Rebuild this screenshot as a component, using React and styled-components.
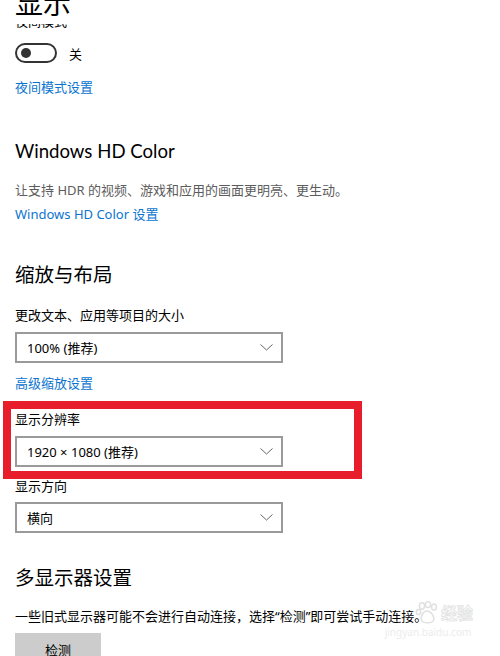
import React from "react";
import styled, { createGlobalStyle } from "styled-components";

const GlobalStyle = createGlobalStyle`
  html, body {
    margin: 0;
    padding: 0;
    background: #fff;
    overflow: hidden;
  }
  body {
    font-family: "Segoe UI", "Noto Sans", "Noto Sans CJK SC", sans-serif;
    color: #000;
  }
`;

const Page = styled.div`
  position: relative;
  width: 500px;
  height: 656px;
  padding-left: 15px;
  box-sizing: border-box;
  overflow: hidden;
`;

const TitleClip = styled.div`
  height: 16px;
  overflow: hidden;
`;

const Title = styled.div`
  font-size: 28px;
  line-height: 28px;
  margin-top: -11px;
`;

const HiddenLabelClip = styled.div`
  margin-top: 8px;
  height: 6px;
  overflow: hidden;
`;

const HiddenLabel = styled.div`
  font-size: 13px;
  line-height: 20px;
  margin-top: -13px;
  color: #000;
`;

const ToggleRow = styled.div`
  display: flex;
  align-items: center;
  gap: 12px;
  margin-top: 13px;
  height: 20px;
  font-size: 13px;
`;

const Toggle = styled.div`
  box-sizing: border-box;
  width: 42px;
  height: 20px;
  border: 2px solid #333;
  border-radius: 10px;
  display: flex;
  align-items: center;
  padding-left: 4px;
`;

const Knob = styled.div`
  width: 10px;
  height: 10px;
  border-radius: 50%;
  background: #333;
`;

const Heading = styled.div`
  font-family: "Lato", "Noto Sans CJK SC", sans-serif;
  font-size: ${(p) => (p.$latin ? 18.6 : 19.5)}px;
  line-height: 28px;
  margin-top: ${(p) => p.$mt}px;
`;

const Label = styled.div`
  font-size: 13px;
  line-height: 20px;
  color: ${(p) => (p.$muted ? "#5c5c5c" : "#000")};
  margin-top: ${(p) => p.$mt || 0}px;
  white-space: nowrap;
`;

const Link = styled.div`
  font-size: 13px;
  line-height: 20px;
  color: #0b74cf;
  margin-top: ${(p) => p.$mt}px;
`;

const SelectBox = styled.div`
  box-sizing: border-box;
  width: 268px;
  height: 31px;
  border: 2px solid #9a9a9a;
  margin-top: ${(p) => p.$mt}px;
  display: flex;
  align-items: center;
  justify-content: space-between;
  padding: 0 8px 0 10px;
  font-size: 13px;
`;

const Highlight = styled.div`
  box-sizing: border-box;
  width: 359px;
  margin-left: -12px;
  margin-top: 8px;
  border: 8px solid #e81d2c;
  padding: 0 0 4px 4px;
`;

const Button = styled.div`
  width: 86px;
  height: 32px;
  margin-top: 7px;
  background: #cccccc;
  display: flex;
  align-items: center;
  justify-content: center;
  font-size: 13px;
`;

const Watermark = styled.div`
  position: absolute;
  left: 383px;
  top: 601px;
  width: 90px;
  display: flex;
  flex-direction: column;
  align-items: flex-end;
  color: #fff;
  pointer-events: none;
`;

const MarkTop = styled.div`
  display: flex;
  align-items: center;
  gap: 2px;
  font-size: 16px;
  font-weight: bold;
  line-height: 22px;
  -webkit-text-stroke: 0.8px #e2e2e2;
`;

const MarkUrl = styled.div`
  align-self: stretch;
  font-size: 10px;
  line-height: 12px;
  margin-top: 2px;
  color: #ececec;
  text-align: center;
`;

function Chevron() {
  return (
    <svg width="13" height="7" viewBox="0 0 13 7">
      <path d="M0.5 0.5 L6.5 6 L12.5 0.5" fill="none" stroke="#666" strokeWidth="1" />
    </svg>
  );
}

function Select({ value, mt }) {
  return (
    <SelectBox $mt={mt}>
      <span>{value}</span>
      <Chevron />
    </SelectBox>
  );
}

function Paw() {
  return (
    <svg width="24" height="23" viewBox="0 0 24 23" fill="none" stroke="#e0e0e0" strokeWidth="1.5">
      <ellipse cx="7" cy="5" rx="2.6" ry="3.2" />
      <ellipse cx="13" cy="3.6" rx="2.6" ry="3" />
      <ellipse cx="19" cy="6" rx="2.4" ry="3" />
      <ellipse cx="3.5" cy="11" rx="2.2" ry="2.6" />
      <path d="M12 10 C8 10 5 16 6.5 19.5 C8 22.5 17 22.5 18.5 19.5 C20 16 16 10 12 10 Z" />
    </svg>
  );
}

export default function App() {
  return (
    <>
      <GlobalStyle />
      <Page>
        <TitleClip>
          <Title>显示</Title>
        </TitleClip>
        <HiddenLabelClip>
          <HiddenLabel>夜间模式</HiddenLabel>
        </HiddenLabelClip>
        <ToggleRow>
          <Toggle>
            <Knob />
          </Toggle>
          <span>关</span>
        </ToggleRow>
        <Link $mt={14}>夜间模式设置</Link>

        <Heading $latin $mt={40}>Windows HD Color</Heading>
        <Label $muted $mt={15}>让支持 HDR 的视频、游戏和应用的画面更明亮、更生动。</Label>
        <Link $mt={4}>Windows HD Color 设置</Link>

        <Heading $mt={37}>缩放与布局</Heading>
        <Label $mt={16}>更改文本、应用等项目的大小</Label>
        <Select value="100% (推荐)" mt={7} />
        <Link $mt={10}>高级缩放设置</Link>

        <Highlight>
          <Label>显示分辨率</Label>
          <Select value="1920 × 1080 (推荐)" mt={7} />
        </Highlight>
        <Label $mt={-3}>显示方向</Label>
        <Select value="横向" mt={6} />

        <Heading $mt={31}>多显示器设置</Heading>
        <Label $mt={14}>一些旧式显示器可能不会进行自动连接，选择“检测”即可尝试手动连接。</Label>
        <Button>检测</Button>

        <Watermark>
          <MarkTop>
            <Paw />
            <span>经验</span>
          </MarkTop>
          <MarkUrl>jingyan.baidu.com</MarkUrl>
        </Watermark>
      </Page>
    </>
  );
}
